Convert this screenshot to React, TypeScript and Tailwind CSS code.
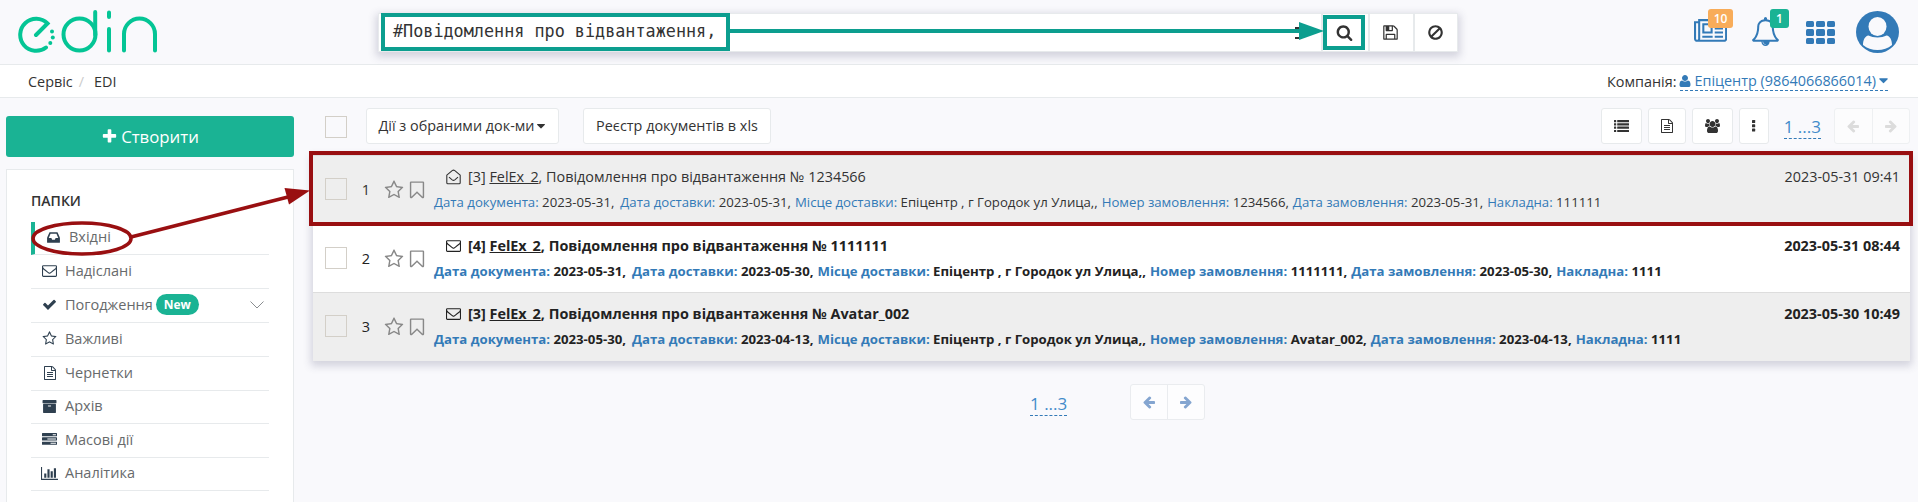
import React from "react";

const P = {
  inbox: "M1151 960h316q-1-3-2.5-8t-2.5-8l-212-496h-708l-212 496q-1 2-2.5 8t-2.5 8h316l95 192h320zm513 30v482q0 26-19 45t-45 19h-1408q-26 0-45-19t-19-45v-482q0-62 25-123l238-552q10-25 36.5-42t52.5-17h832q26 0 52.5 17t36.5 42l238 552q25 61 25 123z",
  envelope: "M1664 1504v-768q-32 36-69 66-268 206-426 338-51 43-83 67t-86.5 48.5-102.5 24.5h-2q-48 0-102.5-24.5t-86.5-48.5-83-67q-158-132-426-338-37-30-69-66v768q0 13 9.5 22.5t22.5 9.5h1472q13 0 22.5-9.5t9.5-22.5zm0-1051v-24.5t-.5-13-3-12.5-5.5-9-9-7.5-14-2.5h-1472q-13 0-22.5 9.5t-9.5 22.5q0 168 147 284 193 152 401 317 6 5 35 29.5t46 37.5 44.5 31.5 50.5 27.5 43 9h2q20 0 43-9t50.5-27.5 44.5-31.5 46-37.5 35-29.5q208-165 401-317 54-43 100.5-115.5t46.5-131.5zm128-37v1088q0 66-47 113t-113 47h-1472q-66 0-113-47t-47-113v-1088q0-66 47-113t113-47h1472q66 0 113 47t47 113z",
  check: "M1671 566q0 40-28 68l-724 724-136 136q-28 28-68 28t-68-28l-136-136-362-362q-28-28-28-68t28-68l136-136q28-28 68-28t68 28l294 295 656-657q28-28 68-28t68 28l136 136q28 28 28 68z",
  star: "M1201 1004l306-297-422-62-189-382-189 382-422 62 306 297-73 421 378-199 377 199zm527-357q0 22-26 48l-363 354 86 500q1 7 1 20 0 50-41 50-19 0-40-12l-449-236-449 236q-22 12-40 12-21 0-31.5-14.5t-10.5-35.5q0-6 2-20l86-500-364-354q-25-27-25-48 0-37 56-46l502-73 225-455q19-41 49-41t49 41l225 455 502 73q56 9 56 46z",
  file: "M1596 380q28 28 48 76t20 88v1152q0 40-28 68t-68 28h-1344q-40 0-68-28t-28-68v-1600q0-40 28-68t68-28h896q40 0 88 20t76 48zm-444-244v376h376q-10-29-22-41l-313-313q-12-12-41-22zm384 1528v-1024h-416q-40 0-68-28t-28-68v-416h-768v1536h1280zm-1024-864q0-14 9-23t23-9h704q14 0 23 9t9 23v64q0 14-9 23t-23 9h-704q-14 0-23-9t-9-23v-64zm736 224q14 0 23 9t9 23v64q0 14-9 23t-23 9h-704q-14 0-23-9t-9-23v-64q0-14 9-23t23-9h704zm0 256q14 0 23 9t9 23v64q0 14-9 23t-23 9h-704q-14 0-23-9t-9-23v-64q0-14 9-23t23-9h704z",
  archive: "M1088 832q0-26-19-45t-45-19h-256q-26 0-45 19t-19 45 19 45 45 19h256q26 0 45-19t19-45zm576-192v960q0 26-19 45t-45 19h-1408q-26 0-45-19t-19-45v-960q0-26 19-45t45-19h1408q26 0 45 19t19 45zm64-448v256q0 26-19 45t-45 19h-1536q-26 0-45-19t-19-45v-256q0-26 19-45t45-19h1536q26 0 45 19t19 45z",
  tasks: "M1024 1408h640v-128h-640v128zm-384-512h1024v-128h-1024v128zm640-512h384v-128h-384v128zm512 832v256q0 26-19 45t-45 19h-1664q-26 0-45-19t-19-45v-256q0-26 19-45t45-19h1664q26 0 45 19t19 45zm0-512v256q0 26-19 45t-45 19h-1664q-26 0-45-19t-19-45v-256q0-26 19-45t45-19h1664q26 0 45 19t19 45zm0-512v256q0 26-19 45t-45 19h-1664q-26 0-45-19t-19-45v-256q0-26 19-45t45-19h1664q26 0 45 19t19 45z",
  chart: "M640 896v512h-256v-512h256zm384-512v1024h-256v-1024h256zm1024 1152v128h-2048v-1536h128v1408h1920zm-640-896v768h-256v-768h256zm384-384v1152h-256v-1152h256z",
  news: "M1024 512h-384v384h384v-384zm128 640v128h-640v-128h640zm0-768v640h-640v-640h640zm640 768v128h-512v-128h512zm0-256v128h-512v-128h512zm0-256v128h-512v-128h512zm0-256v128h-512v-128h512zm-1536 960v-960h-128v960q0 26 19 45t45 19 45-19 19-45zm1664 0v-1088h-1536v1088q0 33-11 64h1483q26 0 45-19t19-45zm128-1216v1216q0 80-56 136t-136 56h-1664q-80 0-136-56t-56-136v-1088h256v-128h1792z",
  bell: "M912 1696q0-16-16-16-59 0-101.5-42.5t-42.5-101.5q0-16-16-16t-16 16q0 73 51.5 124.5t124.5 51.5q16 0 16-16zm-666-288h1300q-266-300-266-832 0-51-24-105t-69-103-121.5-80.5-169.5-31.5-169.5 31.5-121.5 80.5-69 103-24 105q0 532-266 832zm1482 0q0 52-38 90t-90 38h-448q0 106-75 181t-181 75-181-75-75-181h-448q-52 0-90-38t-38-90q50-42 91-88t85-119.5 74.5-158.5 50-206 19.5-260q0-152 117-282.5t307-158.5q-8-19-8-39 0-40 28-68t68-28 68 28 28 68q0 20-8 39 190 28 307 158.5t117 282.5q0 139 19.5 260t50 206 74.5 158.5 85 119.5 91 88z",
  search: "M1216 832q0-185-131.5-316.5t-316.5-131.5-316.5 131.5-131.5 316.5 131.5 316.5 316.5 131.5 316.5-131.5 131.5-316.5zm512 832q0 52-38 90t-90 38q-54 0-90-38l-343-342q-179 124-399 124-143 0-273.5-55.5t-225-150-150-225-55.5-273.5 55.5-273.5 150-225 225-150 273.5-55.5 273.5 55.5 225 150 150 225 55.5 273.5q0 220-124 399l343 343q37 37 37 90z",
  floppy: "M512 1536h768v-384h-768v384zm896 0h128v-896q0-14-10-38.5t-20-34.5l-281-281q-10-10-34-20t-39-10v416q0 40-28 68t-68 28h-576q-40 0-68-28t-28-68v-416h-128v1280h128v-416q0-40 28-68t68-28h832q40 0 68 28t28 68v416zm-384-928v-320q0-13-9.5-22.5t-22.5-9.5h-192q-13 0-22.5 9.5t-9.5 22.5v320q0 13 9.5 22.5t22.5 9.5h192q13 0 22.5-9.5t9.5-22.5zm640 32v928q0 40-28 68t-68 28h-1344q-40 0-68-28t-28-68v-1344q0-40 28-68t68-28h928q40 0 88 20t76 48l280 280q28 28 48 76t20 88z",
  ban: "M1440 893q0-161-87-295l-754 753q137 89 297 89 111 0 211.5-43.5t173.5-116.5 116-174.5 43-212.5zm-999 299l755-754q-135-91-300-91-148 0-273 73t-198 199-73 274q0 162 89 299zm1223-299q0 157-61 300t-163.5 246-245 164-298.5 61-298.5-61-245-164-163.5-246-61-300 61-299.5 163.5-245.5 245-164 298.5-61 298.5 61 245 164 163.5 245.5 61 299.5z",
  users: "M593 896q-162 5-265 128h-134q-82 0-138-40.5t-56-118.5q0-353 124-353 6 0 43.5 21t97.5 42.5 119 21.5q67 0 133-23-5 37-5 66 0 139 81 256zm1071 637q0 120-73 189.5t-194 69.5h-874q-121 0-194-69.5t-73-189.5q0-53 3.5-103.5t14-109 26.5-108.5 43-97.5 62-81 85.5-53.5 111.5-20q10 0 43 21.5t73 48 107 48 135 21.5 135-21.5 107-48 73-48 43-21.5q61 0 111.5 20t85.5 53.5 62 81 43 97.5 26.5 108.5 14 109 3.5 103.5zm-1024-1277q0 106-75 181t-181 75-181-75-75-181 75-181 181-75 181 75 75 181zm704 384q0 159-112.5 271.5t-271.5 112.5-271.5-112.5-112.5-271.5 112.5-271.5 271.5-112.5 271.5 112.5 112.5 271.5zm576 225q0 78-56 118.5t-138 40.5h-134q-103-123-265-128 81-117 81-256 0-29-5-66 66 23 133 23 59 0 119-21.5t97.5-42.5 43.5-21q124 0 124 353zm-128-609q0 106-75 181t-181 75-181-75-75-181 75-181 181-75 181 75 75 181z",
  arrow: "M1664 896v128q0 53-32.5 90.5t-84.5 37.5h-704l293 294q38 36 38 90t-38 90l-75 76q-37 37-90 37-52 0-91-37l-651-652q-37-37-37-90 0-52 37-91l651-650q38-38 91-38 52 0 90 38l75 74q38 38 38 91t-38 91l-293 293h704q52 0 84.5 37.5t32.5 90.5z",
  user: "M1600 1405q0 120-73 189.5t-194 69.5h-874q-121 0-194-69.5t-73-189.5q0-53 3.5-103.5t14-109 26.5-108.5 43-97.5 62-81 85.5-53.5 111.5-20q9 0 42 21.5t74.5 48 108 48 133.5 21.5 133.5-21.5 108-48 74.5-48 42-21.5q61 0 111.5 20t85.5 53.5 62 81 43 97.5 26.5 108.5 14 109 3.5 103.5zm-320-893q0 159-112.5 271.5t-271.5 112.5-271.5-112.5-112.5-271.5 112.5-271.5 271.5-112.5 271.5 112.5 112.5 271.5z",
  bookmark: "M1408 256h-1024v1242l423-406 89-85 89 85 423 406v-1242zm12-128q23 0 44 9 33 13 52.5 41t19.5 62v1289q0 34-19.5 62t-52.5 41q-19 8-44 8-48 0-83-32l-441-424-441 424q-36 33-83 33-23 0-44-9-33-13-52.5-41t-19.5-62v-1289q0-34 19.5-62t52.5-41q21-9 44-9h1048z",
  plus: "M1600 736v192q0 40-28 68t-68 28h-416v416q0 40-28 68t-68 28h-192q-40 0-68-28t-28-68v-416h-416q-40 0-68-28t-28-68v-192q0-40 28-68t68-28h416v-416q0-40 28-68t68-28h192q40 0 68 28t28 68v416h416q40 0 68 28t28 68z",
  caret: "M1408 704q0 26-19 45l-448 448q-19 19-45 19t-45-19l-448-448q-19-19-19-45t19-45 45-19h896q26 0 45 19t19 45z",
};

function Icon({ d, size = 15, w = 1792, className = "" }: { d: string; size?: number; w?: number; className?: string }) {
  return (
    <svg width={(size * w) / 1792} height={size} viewBox={`0 0 ${w} 1792`} fill="currentColor" className={"shrink-0 " + className}>
      <path d={d} />
    </svg>
  );
}

function EnvelopeOpen() {
  return (
    <svg width="15" height="16" viewBox="0 0 15 16" fill="none" stroke="currentColor" strokeWidth="1.1" strokeLinejoin="round" className="shrink-0">
      <path d="M.8 6.2 6.2 1.6Q7.5.7 8.8 1.6l5.4 4.6v7.6q0 1-1 1H1.800q-1 0-1-1z" />
      <path d="M3 8.200l3.200 2.700q1.300 1 2.600 0L12 8.200" />
    </svg>
  );
}

function Logo() {
  return (
    <svg width="140" height="44" viewBox="18 9 140 44" fill="none" stroke="#04c595" strokeWidth="4" strokeLinecap="round" className="shrink-0">
      <path d="M36 35 47.500 23.500A16 16 0 1 0 46 47.500" />
      <circle cx="79.500" cy="34.500" r="16" />
      <path d="M95.200 12v23M109 12.500v4.500M109 29v21.500M124 50.500V34a15.500 15.500 0 0 1 31 0v16.500" />
      <g fill="#04c595" stroke="none">
        <circle cx="52" cy="31.500" r="2" />
        <circle cx="52.800" cy="37.500" r="2" />
        <circle cx="50.300" cy="43" r="2" />
      </g>
    </svg>
  );
}

const folders = [
  { d: P.inbox, label: "Вхідні", h: "h-[33px]", active: true },
  { d: P.envelope, label: "Надіслані", h: "h-[34px]" },
  { d: P.check, label: "Погодження", h: "h-[34px]", isNew: true },
  { d: P.star, label: "Важливі", h: "h-[34px]" },
  { d: P.file, label: "Чернетки", h: "h-[34px]", size: 14 },
  { d: P.archive, label: "Архів", h: "h-[33px]" },
  { d: P.tasks, label: "Масові дії", h: "h-[34px]" },
  { d: P.chart, w: 2048, label: "Аналітика", h: "h-[33px]" },
];

const rows = [
  {
    n: 1, count: "[3]", doc: "1234566", date: "2023-05-31 09:41", read: true, look: "h-[69px] bg-[#eeeeee]",
    f: [["Дата документа:", "2023-05-31,"], ["Дата доставки:", "2023-05-31,"], ["Місце доставки:", "Епіцентр , г Городок ул Улица,,"], ["Номер замовлення:", "1234566,"], ["Дата замовлення:", "2023-05-31,"], ["Накладна:", "111111"]],
  },
  {
    n: 2, count: "[4]", doc: "1111111", date: "2023-05-31 08:44", read: false, look: "h-[68px] bg-white",
    f: [["Дата документа:", "2023-05-31,"], ["Дата доставки:", "2023-05-30,"], ["Місце доставки:", "Епіцентр , г Городок ул Улица,,"], ["Номер замовлення:", "1111111,"], ["Дата замовлення:", "2023-05-30,"], ["Накладна:", "1111"]],
  },
  {
    n: 3, count: "[3]", doc: "Avatar_002", date: "2023-05-30 10:49", read: false, look: "h-[69px] bg-[#eeeeee]",
    f: [["Дата документа:", "2023-05-30,"], ["Дата доставки:", "2023-04-13,"], ["Місце доставки:", "Епіцентр , г Городок ул Улица,,"], ["Номер замовлення:", "Avatar_002,"], ["Дата замовлення:", "2023-04-13,"], ["Накладна:", "1111"]],
  },
];

const toolBtn = "flex h-9 items-center justify-center rounded-[3px] border border-[#e7eaec] bg-white";

function Pages() {
  return <span className="border-b border-dashed border-[#337ab7] text-[17px] leading-[23px] text-[#428bca]">1 ...3</span>;
}

export default function App() {
  return (
    <div className="relative h-[502px] w-[1918px] overflow-hidden whitespace-nowrap bg-[#f9f9fc] font-['Open_Sans','Noto_Sans',sans-serif] text-[14.500px] text-[#333]">
      <header className="flex h-[65px] items-start border-b border-[#e7eaec]">
        <div className="w-[378px] pt-[9px] pl-[18px]"><Logo /></div>
        <div className="mt-[13px] flex h-[39px] w-[1080px] border border-[#e7eaec] bg-white shadow-[0_3px_8px_2px_rgba(60,60,100,0.2)]">
          <div className="flex w-[942px] items-center justify-between pl-[14px]">
            <span className="pb-[2px] font-['DejaVu_Sans_Mono',monospace] text-[16.800px]">#Повідомлення про відвантаження,</span>
            <span className="mr-[19px] flex flex-col gap-[8px]"><i className="h-[2px] w-[7px] bg-[#333]" /><i className="h-[2px] w-[7px] bg-[#333]" /></span>
          </div>
          <div className="flex w-[47px] items-center justify-center border-l-2 border-[#e7eaec] pr-[2px]"><Icon d={P.search} size={17} /></div>
          <div className="flex w-[45px] items-center justify-center border-l-2 border-[#e7eaec] pr-[2px]"><Icon d={P.floppy} size={17} /></div>
          <div className="flex w-[44px] items-center justify-center border-l-2 border-[#e7eaec] pr-[2px]"><Icon d={P.ban} size={17} /></div>
        </div>
        <div className="flex pt-2 pl-[236px] text-[#337ab7]">
          <div className="relative w-[57px] pt-[9px]">
            <Icon d={P.news} w={2048} size={29} />
            <span className="absolute top-[1px] left-[14px] flex h-[19px] w-[25px] items-center justify-center rounded-[3px] bg-[#f8ac59] text-[12px] font-semibold text-white">10</span>
          </div>
          <div className="relative w-[55px] pt-[9px]">
            <Icon d={P.bell} size={29} />
            <span className="absolute top-[1px] left-[19px] flex h-[19px] w-[19px] items-center justify-center rounded-[3px] bg-[#1ab394] text-[12px] font-semibold text-white">1</span>
          </div>
          <div className="mt-[13px] grid h-[23px] w-[29px] grid-cols-3 gap-[2px] self-start">
            {Array.from({ length: 9 }, (_, i) => <i key={i} className="rounded-[1.500px] bg-[#337ab7]" />)}
          </div>
          <svg width="43" height="42" viewBox="0 0 43 42" className="mt-[3px] ml-[21px]">
            <ellipse cx="21.500" cy="21" rx="21.500" ry="21" fill="#337ab7" />
            <path d="M7 34C7 29 9 25 12.500 24.500 17 27 26 27 30.500 24.500 34 25 36 29 36 34 32 37.500 27 39 21.500 39S11 37.500 7 34z" fill="#f9f9fc" />
            <ellipse cx="21.500" cy="15.500" rx="10.500" ry="10.500" fill="#337ab7" />
            <ellipse cx="21.500" cy="15.500" rx="9" ry="9.500" fill="#f9f9fc" />
          </svg>
        </div>
      </header>

      <div className="flex h-[33px] items-center justify-between border-b border-[#e7eaec] bg-white pt-px pr-[30px] pl-7 text-[14.400px]">
        <div className="flex"><span>Сервіс</span><span className="px-[6px] text-[#ccc]">/</span><span className="pl-[4px]">EDI</span></div>
        <div className="flex items-center"><span className="mr-1">Компанія:</span>
          <span className="flex h-[20px] items-center border-b border-dashed border-[#337ab7] text-[#337ab7]"><Icon d={P.user} size={14} className="-ml-[2px]" /><span className="mx-[2px]">Епіцентр (9864066866014)</span><Icon d={P.caret} size={15} className="-mr-[3px] -ml-[2px]" /></span>
        </div>
      </div>

      <div className="flex">
        <aside className="w-[313px] pt-[18px] pl-1.5">
          <div className="flex h-[41px] w-[288px] items-center justify-center gap-[3px] rounded-[3px] bg-[#1ab394] text-[16.800px] text-white"><Icon d={P.plus} size={17} />Створити</div>
          <div className="mt-3 h-[340px] w-[288px] border border-[#e7eaec] bg-white pr-6 pl-6">
            <div className="h-[52px] pt-[12px] text-[14px] leading-[38px] font-semibold">ПАПКИ</div>
            {folders.map((f) => (
              <div key={f.label} className={"flex items-center border-b border-[#e7eaec] pb-[2px] text-[#676a6c] " + f.h + (f.active ? " border-l-4 border-l-[#1ab394] pl-[11px]" : " pl-[11px]")}>
                <span className="flex w-[15px] justify-center text-[#2f4050]"><Icon d={f.d} w={f.w} size={f.size ?? 15} /></span>
                <span className="ml-2">{f.label}</span>
                {f.isNew && <><span className="ml-[3px] flex h-[21px] w-[43px] items-center justify-center rounded-full bg-[#1ab394] text-[12px] font-bold text-white">New</span>
                  <svg width="14" height="8" viewBox="0 0 14 8" fill="none" stroke="#8a8d90" strokeWidth="1" className="mr-[5px] ml-auto"><path d="m.5.5 6.500 6.500 6.500-6.500" /></svg></>}
              </div>
            ))}
          </div>
        </aside>

        <main className="w-[1597px]">
          <div className="flex h-[57px] pt-[10px] text-[14.400px]">
            <span className="mt-2 ml-3 h-[22px] w-[22px] border border-[#d3cfc8]" />
            <div className={toolBtn + " ml-[19px] w-[193px]"}>Дії з обраними док-ми<Icon d={P.caret} size={14} className="-mr-[2px]" /></div>
            <div className={toolBtn + " ml-[24px] w-[188px]"}>Реєстр документів в xls</div>
            <div className="ml-auto flex">
              <div className={toolBtn + " w-[41px]"}>
                <svg width="15" height="13" viewBox="0 0 15 13" fill="#333">{[0, 3.300, 6.600, 9.900].map((y) => <g key={y}><rect x="0" y={y} width="2.200" height="2.200" rx=".3" /><rect x="3.200" y={y} width="11.800" height="2.200" rx=".3" /></g>)}</svg>
              </div>
              <div className={toolBtn + " ml-1.5 w-[38px]"}><Icon d={P.file} size={14} /></div>
              <div className={toolBtn + " ml-1.5 w-[41px]"}><Icon d={P.users} w={1920} size={14} /></div>
              <div className={toolBtn + " ml-1.5 w-[30px]"}>
                <svg width="4" height="12" viewBox="0 0 4 12" fill="#333"><rect width="3.200" height="3" rx=".6" /><rect y="4.300" width="3.200" height="3" rx=".6" /><rect y="8.600" width="3.200" height="3" rx=".6" /></svg>
              </div>
              <div className="mt-[7px] ml-[15px]"><Pages /></div>
              <div className="ml-[13px] flex h-9 w-[76px] rounded-[3px] border border-[#eef0f2] bg-[#fcfcfd] text-[#dcdcdc]">
                <span className="flex flex-1 items-center justify-center border-r border-[#eef0f2]"><Icon d={P.arrow} size={14} /></span>
                <span className="flex flex-1 items-center justify-center"><Icon d={P.arrow} size={14} className="-scale-x-100" /></span>
              </div>
            </div>
          </div>

          <div className="shadow-[0_3px_8px_2px_rgba(60,60,100,0.2)]">
            {rows.map((r) => (
              <div key={r.n} className={"flex border-t border-[#dddddd] " + r.look + (r.read ? "" : " font-bold text-[#222]")}>
                <span className="mt-[22px] ml-3 h-[22px] w-[22px] border border-[#d3cfc8]" />
                <span className="mt-[23px] w-[37px] pl-px text-center font-normal">{r.n}</span>
                <span className="mt-[24px] flex gap-[3px] font-normal text-[#888]"><Icon d={P.star} size={20} /><Icon d={P.bookmark} size={20} /></span>
                <div className="pl-[7px]">
                  <div className="mt-[9px] flex h-[23px] items-center pl-[12px]">
                    {r.read ? <EnvelopeOpen /> : <Icon d={P.envelope} size={15} />}
                    <span className="ml-[7px] text-[14.400px]">{r.count} <u>FelEx_2</u>, Повідомлення про відвантаження № {r.doc}</span>
                  </div>
                  <div className="mt-[5px] flex h-[20px] items-center gap-[4px] text-[13.200px]">
                    {r.f.map(([k, v], i) => <span key={k} className={i === 0 ? "mr-[2px]" : ""}><span className="text-[#337ab7]">{k}</span> {v}</span>)}
                  </div>
                </div>
                <span className="mt-[9px] mr-[10px] ml-auto text-[14.400px] leading-[23px]">{r.date}</span>
              </div>
            ))}
          </div>

          <div className="flex pt-[23px] pl-[717px]">
            <div className="mt-[8px] w-[100px]"><Pages /></div>
            <div className="flex h-9 w-[75px] rounded-[3px] border border-[#eaecef] bg-[#fdfdfe] text-[#84a5d0]">
              <span className="flex flex-1 items-center justify-center border-r border-[#eaecef]"><Icon d={P.arrow} size={14} /></span>
              <span className="flex flex-1 items-center justify-center"><Icon d={P.arrow} size={14} className="-scale-x-100" /></span>
            </div>
          </div>
        </main>
      </div>

      <svg width="1918" height="502" viewBox="0 0 1918 502" fill="none" strokeWidth="4" className="pointer-events-none absolute top-0 left-0">
        <g stroke="#0c9e8f">
          <rect x="383" y="15" width="345" height="34" />
          <path d="M729 31h572" />
          <path d="m1299 22 25 9-25 9z" fill="#0c9e8f" stroke="none" />
          <rect x="1325" y="17" width="38" height="31" />
        </g>
        <g stroke="#990f11">
          <rect x="311" y="153" width="1600" height="71" />
          <ellipse cx="82" cy="238.500" rx="49" ry="15.500" strokeWidth="3.500" />
          <path d="M131 237 290 196.500" strokeWidth="3.500" />
          <path d="m284.500 188 25.500 2.500-21 14z" fill="#990f11" stroke="none" />
        </g>
      </svg>
    </div>
  );
}
